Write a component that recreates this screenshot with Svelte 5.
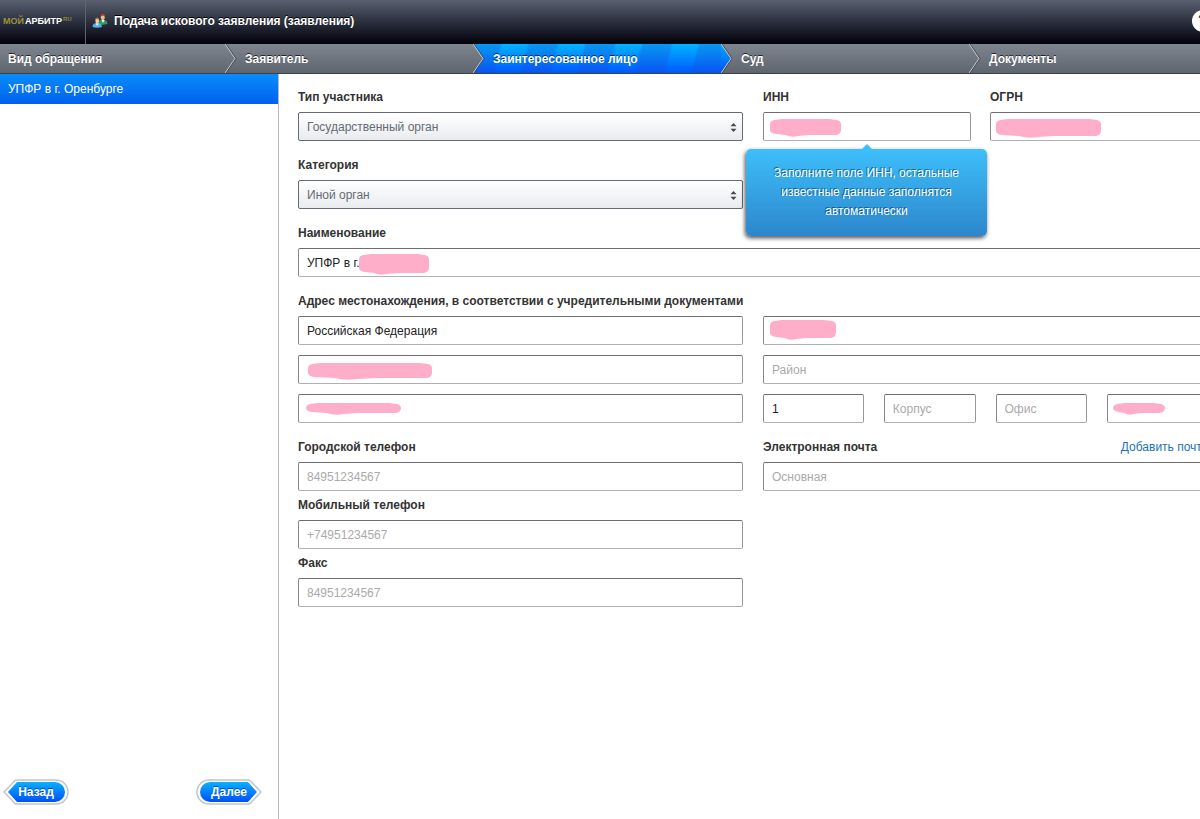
<script>
  const steps = ['Вид обращения', 'Заявитель', 'Заинтересованное лицо', 'Суд', 'Документы'];
  const active = 2;

  // Outline of a hand-brushed mark covering a private value
  function brush(w, h) {
    const b = h - 2;
    return `M0 5 Q0 2 4 1 L12 0 H${w - 12} L${w - 4} 1 Q${w} 2 ${w} 5 V${b - 5} Q${w} ${b - 1} ${w - 5} ${b} H${w * 0.55} L${w * 0.4} ${b + 1} Q${w * 0.3} ${h + 1} ${w * 0.22} ${b} L6 ${b - 1} Q0 ${b - 2} 0 ${b - 5}Z`;
  }
</script>

{#snippet mark(x, y, w, h)}
  <svg class="mark" style="left:{x}px;top:{y}px" width={w} height={h} aria-hidden="true">
    <path d={brush(w, h)} fill="#ffaec9" />
  </svg>
{/snippet}

{#snippet arrows()}
  <svg class="arrows" width="7" height="9" viewBox="0 0 7 9" aria-hidden="true">
    <path d="M3.5 0L6.5 3.3H.5ZM3.5 9L.5 5.7H6.5Z" fill="#444a52" />
  </svg>
{/snippet}

<div class="page">
  <header>
    <a class="logo" href="#home"><span>МОЙ</span><b>АРБИТР</b><sup>RU</sup></a>
    <div class="title">
      <svg width="16" height="16" viewBox="0 0 16 16" aria-hidden="true">
        <path d="M6.500 11Q6.500 7 9 7L11 8L13 7Q15.500 8 15.500 11L9.500 12Z" fill="#2f9a62" />
        <path d="M9.300 7L11 10L12.700 7Z" fill="#e8f0e8" />
        <ellipse cx="10.800" cy="4.300" rx="2" ry="2.800" fill="#f0b98f" />
        <path d="M8.500 4Q8.500 .5 10.900 .7Q13.400 1 13 4.500L12.300 2.800L9.500 2.700Z" fill="#b03a24" />
        <path d="M.5 14Q.5 10.500 4 10.300H6Q9.500 10.500 10 14Q5 15.500 .5 14Z" fill="#4fb4e6" />
        <path d="M3.500 10.300L5.200 13L7 10.300Z" fill="#e4f2fb" />
        <ellipse cx="5.200" cy="7.800" rx="1.900" ry="2.600" fill="#f4cba4" />
        <path d="M3 7.300Q2.900 4.600 5.200 4.600Q7.500 4.600 7.300 7.300L6.500 6.200L3.800 6.100Z" fill="#a86e2c" />
      </svg>
      <h1>Подача искового заявления (заявления)</h1>
    </div>
    <button class="help" aria-label="Справка">?</button>
  </header>

  <ol class="steps">
    {#each steps as step, i}
      <li class:active={i === active}>
        {#if i > 0}
          <svg width="12" height="29" viewBox="0 0 12 29" aria-hidden="true">
            <defs>
              <linearGradient id="fill{i}" x2="0" y2="1">
                <stop offset="0" stop-color={i - 1 === active ? '#00aaff' : '#7f858f'} />
                <stop offset="1" stop-color={i - 1 === active ? '#0050fa' : '#5f656f'} />
              </linearGradient>
            </defs>
            <path d="M0 0L10 14.500L0 29Z" fill="url(#fill{i})" />
            <path d="M1 0L11 14.500L1 29" fill="none" stroke="#41464f" />
            <path d="M0 0L10 14.500L0 29" fill="none" stroke="#c4c8ce" />
          </svg>
        {/if}
        <a href="#step{i}">{step}</a>
      </li>
    {/each}
  </ol>

  <div class="body">
    <aside>
      <a class="person" href="#participant">УПФР в г. Оренбурге</a>
      <nav>
        <button>
          <svg width="66" height="26" viewBox="0 0 66 26" aria-hidden="true">
            <defs>
              <linearGradient id="pill" x2="0" y2="1">
                <stop offset="0" stop-color="#0ab0ff" />
                <stop offset="1" stop-color="#0050f8" />
              </linearGradient>
            </defs>
            <path d="M1 13L12 1.500Q13 1 14 1H53A12 12 0 0 1 53 25H14Q13 25 12 24.500Z" fill="#fff" stroke="#c0c4ca" stroke-width="1.500" />
            <path d="M5 13L14 3H52A10 10 0 0 1 52 23H14Z" fill="url(#pill)" />
          </svg>
          <span>Назад</span>
        </button>
        <button>
          <svg class="flip" width="66" height="26" viewBox="0 0 66 26" aria-hidden="true">
            <path d="M1 13L12 1.500Q13 1 14 1H53A12 12 0 0 1 53 25H14Q13 25 12 24.500Z" fill="#fff" stroke="#c0c4ca" stroke-width="1.500" />
            <path d="M5 13L14 3H52A10 10 0 0 1 52 23H14Z" fill="url(#pill)" />
          </svg>
          <span>Далее</span>
        </button>
      </nav>
    </aside>

    <main>
      <form>
        <div class="columns">
          <div class="stack">
            <div class="field">
              <label for="type">Тип участника</label>
              <div class="box">
                <select id="type"><option>Государственный орган</option></select>
                {@render arrows()}
              </div>
            </div>
            <div class="field">
              <label for="category">Категория</label>
              <div class="box">
                <select id="category"><option>Иной орган</option></select>
                {@render arrows()}
              </div>
            </div>
          </div>
          <div class="ids">
            <div class="field">
              <label for="inn">ИНН</label>
              <div class="box">
                <input id="inn" aria-describedby="inn-tip" />
                {@render mark(7, 7, 71, 18)}
                <div class="tip" id="inn-tip" role="tooltip">
                  Заполните поле ИНН, остальные известные данные заполнятся автоматически
                </div>
              </div>
            </div>
            <div class="field">
              <label for="ogrn">ОГРН</label>
              <div class="box">
                <input id="ogrn" />
                {@render mark(6, 7, 105, 19)}
              </div>
            </div>
          </div>
        </div>

        <div class="field">
          <label for="name">Наименование</label>
          <div class="box">
            <input id="name" value="УПФР в г." />
            {@render mark(61, 6, 70, 21)}
          </div>
        </div>

        <fieldset class="field">
          <legend>Адрес местонахождения, в соответствии с учредительными документами</legend>
          <div class="columns address">
            <div class="box"><input aria-label="Страна" value="Российская Федерация" /></div>
            <div class="box"><input aria-label="Регион" />{@render mark(7, 4, 66, 20)}</div>
            <div class="box"><input aria-label="Город" />{@render mark(10, 8, 124, 17)}</div>
            <div class="box"><input aria-label="Район" placeholder="Район" /></div>
            <div class="box"><input aria-label="Улица" />{@render mark(8, 9, 95, 12)}</div>
            <div class="house">
              <div class="box"><input aria-label="Дом" value="1" /></div>
              <div class="box"><input aria-label="Корпус" placeholder="Корпус" /></div>
              <div class="box"><input aria-label="Офис" placeholder="Офис" /></div>
              <div class="box"><input aria-label="Индекс" />{@render mark(6, 9, 52, 12)}</div>
            </div>
          </div>
        </fieldset>

        <div class="columns">
          <div class="stack tight">
            <div class="field">
              <label for="phone">Городской телефон</label>
              <div class="box"><input id="phone" type="tel" placeholder="84951234567" /></div>
            </div>
            <div class="field">
              <label for="mobile">Мобильный телефон</label>
              <div class="box"><input id="mobile" type="tel" placeholder="+74951234567" /></div>
            </div>
            <div class="field">
              <label for="fax">Факс</label>
              <div class="box"><input id="fax" type="tel" placeholder="84951234567" /></div>
            </div>
          </div>
          <div class="field">
            <div class="caption">
              <label for="email">Электронная почта</label>
              <a href="#add">Добавить почту</a>
            </div>
            <div class="box"><input id="email" type="email" placeholder="Основная" /></div>
          </div>
        </div>
      </form>
    </main>
  </div>
</div>

<style>
  :global(body) {
    margin: 0;
  }
  .page,
  .page * {
    box-sizing: border-box;
  }
  .page {
    min-height: 100vh;
    display: flex;
    flex-direction: column;
    overflow: hidden;
    background: #fff;
    color: #333;
    font: 12px/16px 'Liberation Sans', Arial, sans-serif;
  }
  a {
    text-decoration: none;
  }
  button,
  input,
  select {
    font: inherit;
  }

  header {
    display: flex;
    align-items: center;
    height: 44px;
    background: linear-gradient(#596070, #2b2f3d 50%, #050510 95%);
    color: #fff;
  }
  .logo {
    display: flex;
    align-items: center;
    gap: 1px;
    align-self: stretch;
    width: 86px;
    padding: 0 0 2px 3px;
    border-right: 1px solid #62656f;
    font: bold 9px/12px 'Liberation Sans', Arial, sans-serif;
    color: #fff;
  }
  .logo span {
    color: #9a9040;
  }
  .logo sup {
    padding-bottom: 4px;
    font-size: 6px;
    line-height: 8px;
    color: #8c8440;
  }
  .title {
    flex: 1;
    display: flex;
    align-items: center;
    gap: 6px;
    padding: 0 0 2px 6px;
  }
  h1 {
    margin: 0;
    font-size: 12px;
    line-height: 16px;
    text-shadow: 0 -1px 0 #000;
  }
  .help {
    width: 22px;
    height: 22px;
    margin: 0 -14px 2px 0;
    padding: 0;
    border: 0;
    border-radius: 50%;
    background: #fff;
    color: #20242f;
    font-size: 16px;
    font-weight: bold;
  }

  .steps {
    display: grid;
    grid-template-columns: 225px repeat(3, 248px) 1fr;
    height: 30px;
    margin: 0;
    padding: 0;
    list-style: none;
    border-bottom: 1px solid #3b3f48;
    background: linear-gradient(#7f858f, #5f656f);
  }
  .steps li {
    display: flex;
    align-items: center;
    gap: 8px;
  }
  .steps li:first-child {
    padding-left: 8px;
  }
  .steps .active {
    background:
      repeating-linear-gradient(105deg, rgba(30, 70, 200, 0.25) 0 26px, transparent 29px 52px, rgba(30, 70, 200, 0.25) 55px),
      linear-gradient(#00b4ff, #0058ff);
  }
  .steps a {
    font-weight: bold;
    color: #fff;
    text-shadow: 0 -1px 0 rgba(0, 0, 0, 0.7);
  }

  .body {
    flex: 1;
    display: grid;
    grid-template-columns: 279px 1fr;
  }
  aside {
    display: flex;
    flex-direction: column;
    justify-content: space-between;
    border-right: 1px solid #b9bbbf;
  }
  .person {
    padding: 7px 8px;
    background: linear-gradient(#0a8cfa, #0060ee);
    color: #fff;
  }
  nav {
    display: flex;
    justify-content: space-between;
    padding: 0 16px 14px 3px;
  }
  nav button {
    position: relative;
    width: 66px;
    height: 26px;
    padding: 0;
    border: 0;
    background: none;
    color: #fff;
    font-weight: bold;
    text-shadow: 0 -1px 0 rgba(0, 30, 120, 0.6);
  }
  nav svg {
    position: absolute;
    inset: 0;
  }
  nav .flip {
    transform: scaleX(-1);
  }
  nav span {
    position: relative;
  }

  main {
    padding: 15px 0 20px 19px;
  }
  form {
    display: flex;
    flex-direction: column;
    gap: 16px;
    margin-right: -8px;
  }
  .columns {
    display: grid;
    grid-template-columns: 1fr 1fr;
    gap: 20px;
    align-items: start;
  }
  .address {
    row-gap: 10px;
  }
  .stack {
    display: flex;
    flex-direction: column;
    gap: 16px;
  }
  .tight {
    gap: 6px;
  }
  .ids {
    display: grid;
    grid-template-columns: 208px 1fr;
    gap: 19px;
  }
  .house {
    display: grid;
    grid-template-columns: 11fr 10fr 10fr 11fr;
    gap: 20px;
  }
  .field {
    min-width: 0;
    margin: 0;
    padding: 0;
    border: 0;
  }
  label,
  legend {
    display: block;
    padding: 0;
    margin-bottom: 7px;
    font-weight: bold;
  }
  .caption {
    display: flex;
    justify-content: space-between;
  }
  .caption a {
    color: #1c72b8;
  }
  .box {
    position: relative;
    min-width: 0;
  }
  input,
  select {
    display: block;
    width: 100%;
    height: 29px;
    margin: 0;
    padding: 0 8px;
    border: 1px solid #999;
    border-color: #6e6e72 #98989c #b0b0b4 #88888c;
    border-radius: 2px;
    background: #fff;
    color: #222;
  }
  input::placeholder {
    color: #aaa;
    opacity: 1;
  }
  select {
    appearance: none;
    border-color: #666a72;
    background: linear-gradient(#fff, #e9ebee);
    color: #666b73;
  }
  .arrows {
    position: absolute;
    right: 6px;
    top: 11px;
    pointer-events: none;
  }
  .mark {
    position: absolute;
    pointer-events: none;
  }
  .tip {
    position: absolute;
    z-index: 1;
    top: 100%;
    left: 50%;
    width: 241px;
    margin: 8px 0 0 -121px;
    padding: 15px 24px;
    border-radius: 5px;
    background: linear-gradient(#3dbffa, #2d86cc);
    box-shadow: -1px 2px 4px rgba(0, 0, 0, 0.7);
    color: #fff;
    line-height: 19px;
    text-align: center;
    text-shadow: -1px -1px 0 rgba(0, 50, 100, 0.6);
  }
  .tip::before {
    content: '';
    position: absolute;
    bottom: 100%;
    left: 50%;
    margin-left: -5px;
    border: 5px solid transparent;
    border-top: 0;
    border-bottom-color: #3dbffa;
  }
</style>
